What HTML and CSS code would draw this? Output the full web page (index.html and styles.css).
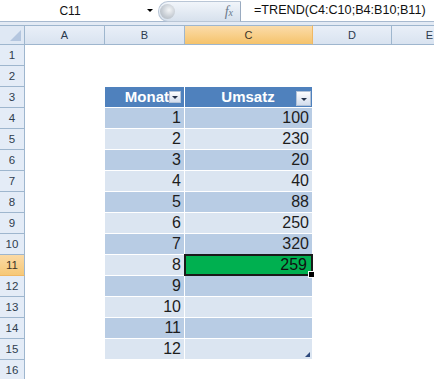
FILE: index.html
```html
<!DOCTYPE html>
<html lang="de">
<head>
    <meta charset="UTF-8">
    <title>TREND</title>
    <link rel="stylesheet" href="styles.css">
</head>
<body>
    <div class="formula-bar">
        <div class="name-box">
            <span class="name">C11</span>
            <span class="arrow"></span>
        </div>
        <div class="fx-area">
            <span class="grip"></span>
            <span class="fx">f<small>x</small></span>
        </div>
        <div class="formula">=TREND(C4:C10;B4:B10;B11)</div>
    </div>
    <div class="gap"></div>

    <div class="viewport">
    <table class="sheet">
        <colgroup>
            <col style="width:25px">
            <col style="width:80px">
            <col style="width:80px">
            <col style="width:128px">
            <col style="width:79px">
            <col style="width:76px">
        </colgroup>
        <tr>
            <th class="corner"><span class="tri"></span></th>
            <th class="ch">A</th>
            <th class="ch">B</th>
            <th class="ch sel">C</th>
            <th class="ch">D</th>
            <th class="ch">E</th>
        </tr>
        <tr><td class="rh">1</td><td></td><td></td><td></td><td></td><td></td></tr>
        <tr><td class="rh">2</td><td></td><td></td><td></td><td></td><td></td></tr>
        <tr>
            <td class="rh">3</td><td></td>
            <td class="hd"><div class="hd-cell monat">Monat<span class="filter small"></span></div></td>
            <td class="hd"><div class="hd-cell umsatz">Umsatz<span class="filter"></span></div></td>
            <td></td><td></td>
        </tr>
        <tr><td class="rh">4</td><td></td><td class="num dk">1</td><td class="num dk">100</td><td></td><td></td></tr>
        <tr><td class="rh">5</td><td></td><td class="num lt">2</td><td class="num lt">230</td><td></td><td></td></tr>
        <tr><td class="rh">6</td><td></td><td class="num dk">3</td><td class="num dk">20</td><td></td><td></td></tr>
        <tr><td class="rh">7</td><td></td><td class="num lt">4</td><td class="num lt">40</td><td></td><td></td></tr>
        <tr><td class="rh">8</td><td></td><td class="num dk">5</td><td class="num dk">88</td><td></td><td></td></tr>
        <tr><td class="rh">9</td><td></td><td class="num lt">6</td><td class="num lt">250</td><td></td><td></td></tr>
        <tr><td class="rh">10</td><td></td><td class="num dk">7</td><td class="num dk">320</td><td></td><td></td></tr>
        <tr>
            <td class="rh sel">11</td><td></td><td class="num lt">8</td>
            <td class="num active"><div class="active-cell">259<span class="fill-handle"></span></div></td>
            <td></td><td></td>
        </tr>
        <tr><td class="rh">12</td><td></td><td class="num dk">9</td><td class="num dk"></td><td></td><td></td></tr>
        <tr><td class="rh">13</td><td></td><td class="num lt">10</td><td class="num lt"></td><td></td><td></td></tr>
        <tr><td class="rh">14</td><td></td><td class="num dk">11</td><td class="num dk"></td><td></td><td></td></tr>
        <tr>
            <td class="rh">15</td><td></td><td class="num lt">12</td>
            <td class="num lt"><div class="last-cell"><span class="resize"></span></div></td>
            <td></td><td></td>
        </tr>
        <tr><td class="rh">16</td><td></td><td></td><td></td><td></td><td></td></tr>
    </table>
    </div>
</body>
</html>
```

FILE: styles.css
```css
body {
    margin: 0;
    width: 434px;
    height: 379px;
    overflow: hidden;
    background-color: #ffffff;
    font-family: "Liberation Sans", Arial, sans-serif;
}

/* formula bar */
.formula-bar {
    display: flex;
    height: 21px;
    border-bottom: 1px solid #a7b9cf;
    background-color: #ffffff;
}
.name-box {
    width: 158px;
    display: flex;
    align-items: center;
}
.name {
    width: 140px;
    text-align: center;
    font-size: 12px;
    color: #111;
}
.arrow {
    width: 0;
    height: 0;
    margin-left: 7px;
    border-left: 3px solid transparent;
    border-right: 3px solid transparent;
    border-top: 3px solid #000;
}
.fx-area {
    width: 81px;
    height: 19px;
    margin-top: 1px;
    display: flex;
    align-items: center;
    justify-content: space-between;
    border-radius: 10px 0 0 10px;
    border: 1px solid #b9c6d6;
    border-right: 1px solid #9aabc0;
    background: linear-gradient(#f1f5fa, #d7e1ed);
}
.grip {
    width: 15px;
    height: 15px;
    margin-left: 1px;
    border-radius: 50%;
    background: radial-gradient(circle at 60% 40%, #f4f6f8 0, #c6ccd3 55%, #a9b1bb 100%);
}
.fx {
    margin-right: 7px;
    font-family: "Liberation Serif", serif;
    font-style: italic;
    font-size: 14px;
    color: #6b7a8c;
}
.fx small {
    font-size: 10px;
}
.formula {
    flex: 1;
    padding-left: 13px;
    line-height: 21px;
    font-size: 12.6px;
    color: #111;
    white-space: nowrap;
}
.gap {
    height: 3px;
    background-color: #e3eaf4;
}

/* grid */
.viewport {
    width: 434px;
    overflow: hidden;
}
.sheet {
    border-collapse: separate;
    border-spacing: 0;
    table-layout: fixed;
    width: 468px;
}
.sheet td,
.sheet th {
    padding: 0;
    height: 20px;
    border-right: 1px solid #ffffff;
    border-bottom: 1px solid #ffffff;
    box-sizing: border-box;
    overflow: hidden;
    white-space: nowrap;
}
.sheet td {
    height: 21px;
}
.sheet th {
    font-weight: normal;
}
.ch {
    font-size: 11px;
    color: #2b3a4d;
    text-align: center;
    background: linear-gradient(#e9eff8, #d9e3f0);
    border-right-color: #9eb6ce !important;
    border-bottom-color: #9eb6ce !important;
    border-top: 1px solid #9eb6ce;
}
.ch.sel {
    background: linear-gradient(#fbdcaa, #f5c36b);
    border-right-color: #f0b864 !important;
    color: #3d3528;
}
.corner {
    position: relative;
    background: #dfe8f4;
    border-right-color: #9eb6ce !important;
    border-bottom-color: #9eb6ce !important;
    border-top: 1px solid #9eb6ce;
}
.tri {
    position: absolute;
    right: 3px;
    bottom: 3px;
    width: 0;
    height: 0;
    border-left: 11px solid transparent;
    border-bottom: 11px solid #b4c6df;
}
.rh {
    font-size: 11.5px;
    color: #2f3d4e;
    text-align: center;
    background-color: #e4ecf7;
    border-right-color: #9eb6ce !important;
    border-bottom-color: #9eb6ce !important;
}
.rh.sel {
    background: linear-gradient(#fbdaa5, #f6c877);
    border-bottom-color: #f0b864 !important;
    color: #3d3528;
}

/* list object */
.hd {
    background-color: #4f81bd;
}
.hd-cell {
    position: relative;
    height: 20px;
    line-height: 20px;
    font-size: 15px;
    font-weight: bold;
    color: #ffffff;
}
.monat {
    text-align: right;
    padding-right: 15px;
}
.umsatz {
    text-align: center;
    padding-right: 1px;
}
.filter {
    position: absolute;
    top: 4px;
    right: 1px;
    width: 15px;
    height: 15px;
    box-sizing: border-box;
    border: 1px solid #b3c3d8;
    background: linear-gradient(#fdfdfe, #d3dded);
}
.filter.small {
    right: 3px;
    width: 12px;
    height: 12px;
}
.filter::after {
    content: "";
    position: absolute;
    left: 50%;
    top: 50%;
    margin-left: -3px;
    margin-top: -1px;
    border-left: 3px solid transparent;
    border-right: 3px solid transparent;
    border-top: 3px solid #25324a;
}
.num {
    text-align: right;
    padding-right: 3px !important;
    font-size: 16px;
    color: #1d1d1d;
}
.dk {
    background-color: #b8cce4;
}
.lt {
    background-color: #dbe5f1;
}
.active {
    padding-right: 0 !important;
    overflow: visible !important;
}
.active-cell {
    position: relative;
    height: 22px;
    margin: -1px;
    padding-right: 4px;
    box-sizing: border-box;
    border: 2px solid #1a1a1a;
    background-color: #00b050;
    line-height: 18px;
    color: #101010;
}
.fill-handle {
    position: absolute;
    right: -4px;
    bottom: -4px;
    width: 5px;
    height: 5px;
    background-color: #000;
    border: 1px solid #fff;
}
.last-cell {
    position: relative;
    height: 20px;
}
.resize {
    position: absolute;
    right: -1px;
    bottom: 2px;
    width: 0;
    height: 0;
    border-left: 5px solid transparent;
    border-bottom: 5px solid #2e4a7d;
}
```
